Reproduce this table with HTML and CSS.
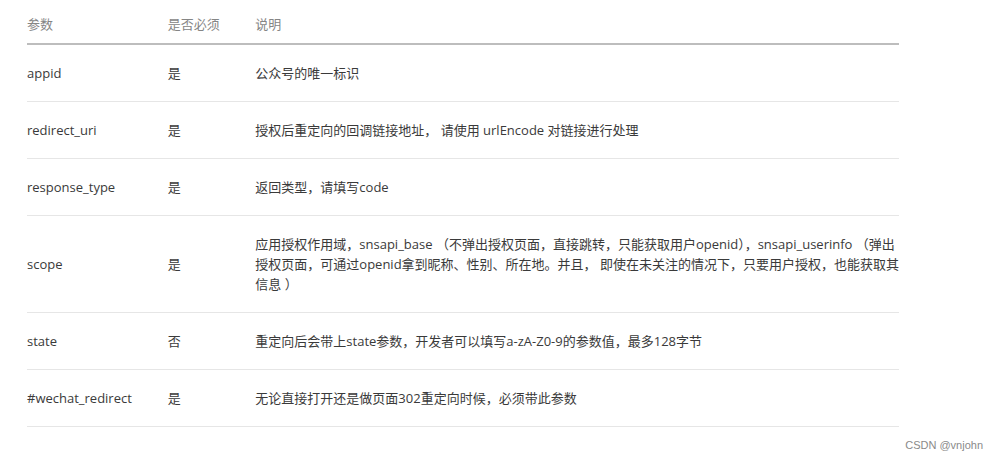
FILE: index.html
```html
<!DOCTYPE html>
<html lang="zh-CN">
<head>
<meta charset="utf-8">
<link rel="stylesheet" href="styles.css">
</head>
<body>
<div class="page">
  <table class="params">
    <thead>
      <tr><th class="c1">参数</th><th class="c2">是否必须</th><th class="c3">说明</th></tr>
    </thead>
    <tbody>
      <tr><td>appid</td><td>是</td><td>公众号的唯一标识</td></tr>
      <tr><td>redirect_uri</td><td>是</td><td>授权后重定向的回调链接地址， 请使用 urlEncode 对链接进行处理</td></tr>
      <tr><td>response_type</td><td>是</td><td>返回类型，请填写code</td></tr>
      <tr><td>scope</td><td>是</td><td>应用授权作用域，snsapi_base （不弹出授权页面，直接跳转，只能获取用户openid），snsapi_userinfo （弹出<br>授权页面，可通过openid拿到昵称、性别、所在地。并且， 即使在未关注的情况下，只要用户授权，也能获取其<br>信息 ）</td></tr>
      <tr><td>state</td><td>否</td><td>重定向后会带上state参数，开发者可以填写a-zA-Z0-9的参数值，最多128字节</td></tr>
      <tr><td>#wechat_redirect</td><td>是</td><td>无论直接打开还是做页面302重定向时候，必须带此参数</td></tr>
    </tbody>
  </table>
  <div class="mark">CSDN @vnjohn</div>
</div>
</body>
</html>
```

FILE: styles.css
```css
html, body {
  margin: 0;
  padding: 0;
  background: #fff;
}
.page {
  padding-left: 27px;
  width: 971px;
  position: relative;
  height: 462px;
}
.params {
  width: 872px;
  border-collapse: collapse;
  font-family: "Open Sans", "Noto Sans CJK SC", sans-serif;
  font-size: 13px;
  line-height: 20px;
  color: #3a3a3a;
}
.params th {
  text-align: left;
  font-weight: normal;
  color: #858585;
  padding: 14px 0 9px 0;
  border-bottom: 2px solid #bdbdbd;
}
.params .c1 { width: 141px; }
.params .c2 { width: 88px; }
.params td {
  padding: 18px 0;
  border-bottom: 1px solid #e6e6e6;
  vertical-align: middle;
  white-space: nowrap;
}
.mark {
  position: absolute;
  right: 15px;
  top: 439px;
  font-family: "Liberation Sans", Arial, sans-serif;
  font-size: 11px;
  color: #8a8a8a;
}
```
